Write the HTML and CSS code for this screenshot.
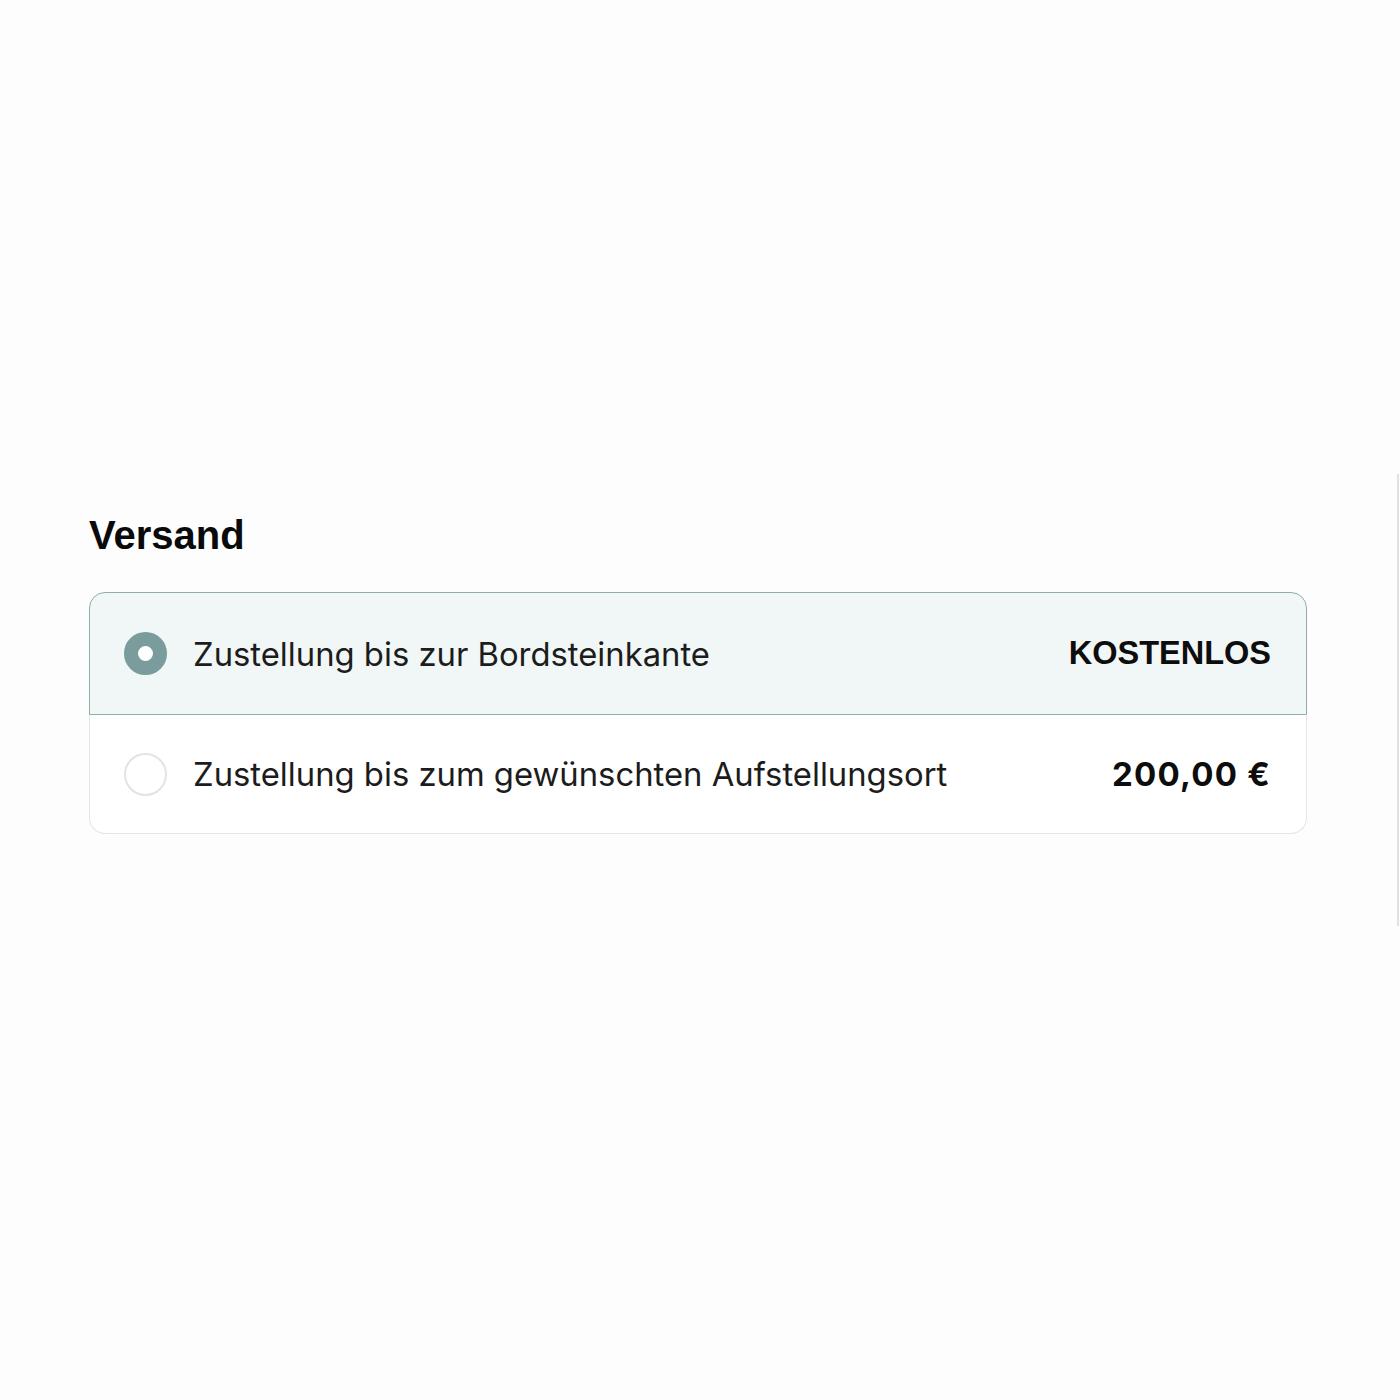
FILE: index.html
```html
<!DOCTYPE html>
<html lang="de">
<head>
<meta charset="utf-8">
<title>Versand</title>
<link rel="stylesheet" href="styles.css">
</head>
<body>
<main class="page">
  <section class="shipping">
    <h2 class="shipping-title">Versand</h2>
    <div class="options">
      <label class="option option--selected">
        <span class="radio radio--checked"></span>
        <span class="option-label">Zustellung bis zur Bordsteinkante</span>
        <span class="option-price">KOSTENLOS</span>
      </label>
      <label class="option">
        <span class="radio"></span>
        <span class="option-label">Zustellung bis zum gewünschten Aufstellungsort</span>
        <span class="option-price option-price--amount">200,00 €</span>
      </label>
    </div>
  </section>
</main>
<div class="scroll-track"></div>
</body>
</html>
```
FILE: styles.css
```css
html, body {
  margin: 0;
  padding: 0;
  background: #fdfdfd;
}

.page {
  padding: 512px 93px 0 89px;
}

.shipping-title {
  margin: 0 0 34px;
  font-family: "Liberation Sans", Arial, sans-serif;
  font-weight: 700;
  font-size: 40px;
  line-height: 46px;
  color: #0a0a0a;
}

.options {
  display: flex;
  flex-direction: column;
}

.option {
  box-sizing: border-box;
  display: flex;
  align-items: center;
  gap: 26px;
  height: 119px;
  padding: 0 35px 0 34px;
  border: 1.5px solid #e4e6e6;
  border-top: none;
  background: #ffffff;
}

.option:last-child {
  border-radius: 0 0 16px 16px;
}

.option--selected {
  height: 123px;
  border: 1.5px solid #8fadad;
  border-radius: 16px 16px 0 0;
  background: #f1f6f6;
}

.radio {
  flex: none;
  width: 43px;
  height: 43px;
  border-radius: 50%;
  border: 2px solid #e3e3e3;
  background: #ffffff;
  box-sizing: border-box;
}

.radio--checked {
  border: 14px solid #7b9c9c;
}

.option-label {
  flex: 1;
  font-family: Inter, "Noto Sans", sans-serif;
  font-size: 32.8px;
  color: #1c1c1c;
}

.option-price {
  font-family: "Liberation Sans", Arial, sans-serif;
  font-weight: 700;
  font-size: 32.5px;
  color: #0d0d0d;
}

.option-price--amount {
  font-family: Inter, "Liberation Sans", sans-serif;
  font-size: 33px;
  letter-spacing: 1.2px;
}

.scroll-track {
  position: fixed;
  right: 1px;
  top: 474px;
  width: 2px;
  height: 452px;
  background: #e2e2e2;
}
```
